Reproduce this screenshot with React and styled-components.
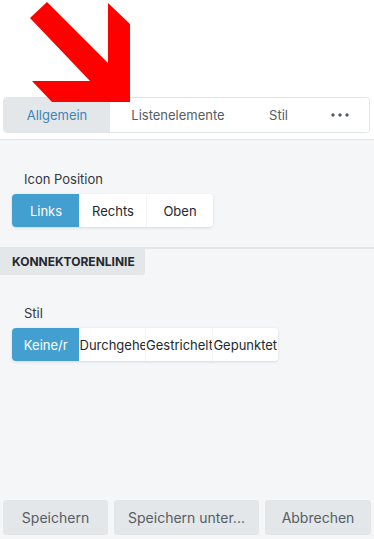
import React, { useState } from 'react';
import styled, { createGlobalStyle } from 'styled-components';

const GlobalStyle = createGlobalStyle`
    html, body {
        margin: 0;
        padding: 0;
        background: #ffffff;
    }
    body {
        font-family: Inter, "Noto Sans", "Liberation Sans", sans-serif;
        -webkit-font-smoothing: antialiased;
    }
`;

const Page = styled.div`
    position: relative;
    width: 374px;
    height: 539px;
    display: flex;
    flex-direction: column;
    background: #f5f6f8;
    overflow: hidden;
`;

const Header = styled.div`
    background: #ffffff;
    padding: 97px 4px 6px 3px;
    border-bottom: 1px solid #e2e4e7;
`;

const TabBar = styled.div`
    display: flex;
    height: 36px;
    box-sizing: border-box;
    border: 1px solid #e2e4e7;
    border-radius: 4px;
    overflow: hidden;
    background: #ffffff;
`;

const Tab = styled.button`
    flex: 0 0 ${({ w }) => w}px;
    display: flex;
    align-items: center;
    justify-content: center;
    border: none;
    margin: 0;
    padding: 0;
    font: inherit;
    font-size: 13px;
    color: ${({ active }) => (active ? '#3c86b5' : '#555d66')};
    background: ${({ active }) => (active ? '#e4e7ea' : '#ffffff')};
    cursor: pointer;
`;

const Panel = styled.div`
    flex: 1;
    display: flex;
    flex-direction: column;
`;

const Group = styled.div`
    padding: ${({ top }) => top}px 12px 0;
`;

const Label = styled.div`
    font-size: 13px;
    color: #32373c;
    padding-left: 12px;
    margin-bottom: 7px;
`;

const Segmented = styled.div`
    display: inline-flex;
    background: #ffffff;
    border-radius: 4px;
    box-shadow: 0 1px 3px rgba(0, 0, 0, 0.12);
    overflow: hidden;
`;

const Segment = styled.button`
    width: ${({ w }) => w}px;
    height: 33px;
    border: none;
    margin: 0;
    padding: 0;
    font: inherit;
    font-size: 13px;
    white-space: nowrap;
    overflow: hidden;
    color: ${({ active }) => (active ? '#ffffff' : '#23282d')};
    background: ${({ active }) => (active ? '#429fd0' : '#ffffff')};
    border-left: 1px solid ${({ first }) => (first ? 'transparent' : '#f3f4f5')};
    cursor: pointer;
`;

const Section = styled.div`
    margin-top: 20px;
    border-top: 2px solid #e4e7ea;
`;

const SectionTitle = styled.div`
    display: inline-block;
    background: #e4e7ea;
    padding: 5px 10px 6px 12px;
    font-size: 12px;
    font-weight: 700;
    color: #23282d;
    border-radius: 0 0 3px 0;
`;

const Footer = styled.div`
    display: flex;
    gap: 6px;
    padding: 0 3px 4px;
`;

const FooterButton = styled.button`
    flex: 0 0 ${({ w }) => w}px;
    height: 35px;
    border: none;
    border-radius: 3px;
    background: #e4e7ea;
    color: #555d66;
    font: inherit;
    font-size: 14px;
    cursor: pointer;
`;

const Arrow = styled.svg`
    position: absolute;
    left: 0;
    top: 0;
    pointer-events: none;
`;

const MoreIcon = () => (
    <svg width="18" height="4" viewBox="0 0 18 4">
        <circle cx="2" cy="2" r="1.7" fill="#555d66" />
        <circle cx="9" cy="2" r="1.7" fill="#555d66" />
        <circle cx="16" cy="2" r="1.7" fill="#555d66" />
    </svg>
);

const SegmentGroup = ({ items, value, onChange, w }) => (
    <Segmented>
        {items.map((item, i) => (
            <Segment key={item} w={w} first={i === 0} active={item === value} onClick={() => onChange(item)}>
                {item}
            </Segment>
        ))}
    </Segmented>
);

const App = () => {
    const [tab, setTab] = useState('Allgemein');
    const [iconPos, setIconPos] = useState('Links');
    const [line, setLine] = useState('Keine/r');

    const tabs = [
        { label: 'Allgemein', w: 106 },
        { label: 'Listenelemente', w: 136 },
        { label: 'Stil', w: 65 },
        { label: 'more', w: 58 },
    ];

    return (
        <Page>
            <GlobalStyle />
            <Header>
                <TabBar>
                    {tabs.map(t => (
                        <Tab key={t.label} w={t.w} active={t.label === tab} onClick={() => setTab(t.label)}>
                            {t.label === 'more' ? <MoreIcon /> : t.label}
                        </Tab>
                    ))}
                </TabBar>
            </Header>
            <Panel>
                <Group top={31}>
                    <Label>Icon Position</Label>
                    <SegmentGroup items={['Links', 'Rechts', 'Oben']} value={iconPos} onChange={setIconPos} w={67} />
                </Group>
                <Section>
                    <SectionTitle>KONNEKTORENLINIE</SectionTitle>
                </Section>
                <Group top={30}>
                    <Label>Stil</Label>
                    <SegmentGroup
                        items={['Keine/r', 'Durchgehend', 'Gestrichelt', 'Gepunktet']}
                        value={line}
                        onChange={setLine}
                        w={66.5}
                    />
                </Group>
            </Panel>
            <Footer>
                <FooterButton w={105}>Speichern</FooterButton>
                <FooterButton w={145}>Speichern unter...</FooterButton>
                <FooterButton w={106}>Abbrechen</FooterButton>
            </Footer>
            {/* red annotation arrow */}
            <Arrow width="140" height="110" viewBox="0 0 140 110">
                <polygon
                    points="47,2 108,63 108,3 130,24 130,102 52,102 32,81 90,81 30,18"
                    fill="#ff0000"
                />
            </Arrow>
        </Page>
    );
};

export default App;
